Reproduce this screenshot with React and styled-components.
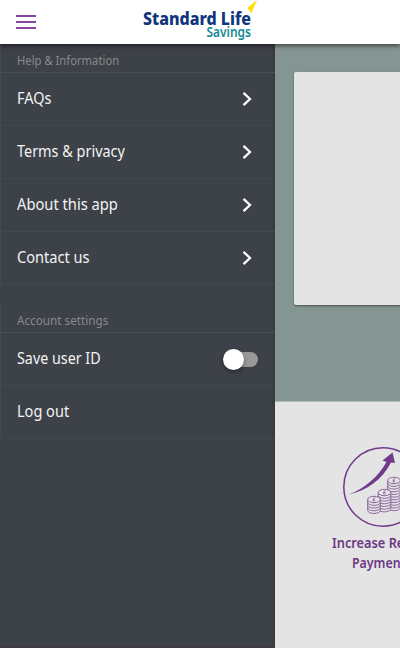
import React, { useLayoutEffect, useRef, useState } from 'react';
import styled, { createGlobalStyle } from 'styled-components';

const GlobalStyle = createGlobalStyle`
  * { box-sizing: border-box; }
  body { margin: 0; overflow: hidden; font-family: 'Noto Sans', 'Open Sans', sans-serif; }
`;

const Screen = styled.div`
  width: 400px;
  height: 648px;
  display: flex;
  flex-direction: column;
  overflow: hidden;
  background: #e4e4e4;
`;

const Header = styled.header`
  position: relative;
  z-index: 2;
  flex: 0 0 44px;
  display: flex;
  align-items: flex-start;
  background: #fff;
  box-shadow: 0 2px 4px rgba(0, 0, 0, 0.5);
`;

const MenuButton = styled.button`
  width: 52px;
  height: 44px;
  padding: 15px 16px;
  border: 0;
  background: none;
  display: flex;
  flex-direction: column;
  gap: 4px;
`;

const MenuBar = styled.span`
  flex: 0 0 2px;
  background: #86479f;
`;

const Logo = styled.svg`
  margin-left: 88px;
  width: 120px;
  height: 44px;
`;

const Body = styled.div`
  flex: 1;
  display: flex;
  min-height: 0;
`;

const Drawer = styled.nav`
  flex: 0 0 275px;
  display: flex;
  flex-direction: column;
  background: linear-gradient(to right, transparent 271px, rgba(0, 0, 0, 0.13) 275px), #3d4148;
  border-bottom: 2px solid #403a45;
`;

const Section = styled.section`
  margin-bottom: 19px;
  border-left: 1px solid #454950;
`;

const SectionTitle = styled.h2`
  margin: 0;
  height: 29px;
  padding: 6px 0 0 16px;
  border-bottom: 1px solid #4a4e55;
  color: #888a8c;
  font-size: 12.5px;
  line-height: 22px;
  font-weight: 400;
`;

const Row = styled.div`
  height: 53px;
  padding: 0 17px 0 16px;
  display: flex;
  align-items: center;
  justify-content: space-between;
  border-bottom: 1px solid #43474e;
  color: #f3f3f3;
  font-size: 15.5px;
  line-height: 22px;
`;

const Fitted = styled.span`
  display: inline-block;
  white-space: nowrap;
  transform-origin: left center;
`;

const RowLabel = styled.span`
  padding-bottom: 2px;
`;

const Chevron = styled.svg`
  width: 10px;
  height: 16px;
  margin-right: 6px;
  fill: none;
  stroke: #fff;
  stroke-width: 2.3;
`;

const Track = styled.span`
  width: 33px;
  height: 15px;
  border-radius: 8px;
  background: #999;
  display: flex;
  align-items: center;
`;

const Knob = styled.span`
  flex: 0 0 21px;
  height: 21px;
  margin-left: -2px;
  border-radius: 50%;
  background: #fff;
  box-shadow: 0 2px 4px rgba(0, 0, 0, 0.4);
`;

const Main = styled.main`
  flex: 1;
  display: flex;
  flex-direction: column;
  overflow: hidden;
`;

const Hero = styled.div`
  flex: 0 0 358px;
  padding: 28px 0 0 19px;
  background: #859592;
  border-bottom: 1px solid #b4b9b8;
`;

const Card = styled.div`
  width: 180px;
  height: 233px;
  border-radius: 2px;
  background: #e4e4e4;
  box-shadow: 0 1px 2px rgba(0, 0, 0, 0.45);
`;

const Action = styled.div`
  padding: 44px 0 0 57px;
  display: flex;
  flex-direction: column;
  color: #6b3785;
  font-size: 14px;
  line-height: 20px;
  font-weight: 600;
`;

const ActionIcon = styled.svg`
  flex: 0 0 auto;
  width: 82px;
  height: 82px;
  margin-left: 10px;
  margin-bottom: 5px;
`;

const ActionLine = styled.div`
  padding-left: ${(p) => p.$indent || 0}px;
`;

function FitText({ width, children }) {
  const ref = useRef(null);
  const [scale, setScale] = useState(1);
  useLayoutEffect(() => {
    const fit = () => setScale(width / ref.current.offsetWidth);
    fit();
    document.fonts.ready.then(fit);
  }, [width]);
  return <Fitted ref={ref} style={{ transform: `scaleX(${scale})` }}>{children}</Fitted>;
}

const helpLinks = [
  { label: 'FAQs', width: 34.5 },
  { label: 'Terms & privacy', width: 108 },
  { label: 'About this app', width: 100.5 },
  { label: 'Contact us', width: 72.5 },
];

function CoinStack({ x, y, coins }) {
  return (
    <g transform={`translate(${x} ${y})`} fill="#e4e4e4" stroke="#7d5093" strokeWidth="0.85">
      {Array.from({ length: coins }, (_, i) => coins - i).map((n) => (
        <path key={n} d={`M-6.3 ${n * 2.7 - 2.7}v2.7c0 4.2 12.6 4.2 12.6 0v-2.7z`} />
      ))}
      <ellipse rx="6.3" ry="3.2" />
      <path d="M1.3-1.4C-.2-2.3-.9-1.2-.5 0L-1 1.4H1.3M-1.2.1H.7" fill="none" strokeWidth="0.7" />
    </g>
  );
}

export default function App() {
  return (
    <Screen>
      <GlobalStyle />
      <Header>
        <MenuButton aria-label="Menu">
          <MenuBar /><MenuBar /><MenuBar />
        </MenuButton>
        <Logo viewBox="140 0 120 44" fontFamily="'Noto Sans', sans-serif">
          <text x="143" y="24.8" fontSize="16.8" fontWeight="800" fill="#10357c" textLength="108" lengthAdjust="spacingAndGlyphs">Standard Life</text>
          <text x="206.5" y="36.5" fontSize="13.8" fontWeight="600" fill="#138c94" textLength="44.5" lengthAdjust="spacingAndGlyphs">Savings</text>
          <path d="M257 0L247.5 8L251.3 13.2Z" fill="#ffe000" />
        </Logo>
      </Header>
      <Body>
        <Drawer>
          <Section>
            <SectionTitle><FitText width={102.5}>Help &amp; Information</FitText></SectionTitle>
            {helpLinks.map(({ label, width }) => (
              <Row key={label}>
                <RowLabel><FitText width={width}>{label}</FitText></RowLabel>
                <Chevron viewBox="0 0 10 16"><path d="M1.5 1.8L8 8L1.5 14.2" /></Chevron>
              </Row>
            ))}
          </Section>
          <Section>
            <SectionTitle><FitText width={91}>Account settings</FitText></SectionTitle>
            <Row>
              <RowLabel><FitText width={84}>Save user ID</FitText></RowLabel>
              <Track><Knob /></Track>
            </Row>
            <Row><RowLabel><FitText width={52.5}>Log out</FitText></RowLabel></Row>
          </Section>
        </Drawer>
        <Main>
          <Hero><Card /></Hero>
          <Action>
            <ActionIcon viewBox="342 446 82 82">
              <circle cx="383" cy="487" r="39.2" fill="none" stroke="#713a8b" strokeWidth="1.5" />
              <path d="M348.5 494.5C364 489 378 477 386.5 462L382.5 460.5L392.5 452.5L395 463L391 462.5C382 480 366 491 348.5 494.5Z" fill="#713a8b" />
              <CoinStack x={394} y={480.5} coins={10} />
              <CoinStack x={384.5} y={492.5} coins={6} />
              <CoinStack x={374} y={499.5} coins={4} />
            </ActionIcon>
            <ActionLine><FitText width={105}>Increase Regular</FitText></ActionLine>
            <ActionLine $indent={20}><FitText width={60}>Payments</FitText></ActionLine>
          </Action>
        </Main>
      </Body>
    </Screen>
  );
}
